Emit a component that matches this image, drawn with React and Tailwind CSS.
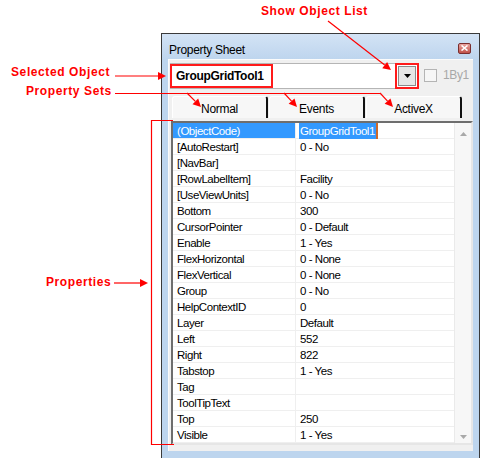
import React from "react";

const rows = [
  ["(ObjectCode)", "GroupGridTool1"],
  ["[AutoRestart]", "0 - No"],
  ["[NavBar]", ""],
  ["[RowLabelItem]", "Facility"],
  ["[UseViewUnits]", "0 - No"],
  ["Bottom", "300"],
  ["CursorPointer", "0 - Default"],
  ["Enable", "1 - Yes"],
  ["FlexHorizontal", "0 - None"],
  ["FlexVertical", "0 - None"],
  ["Group", "0 - No"],
  ["HelpContextID", "0"],
  ["Layer", "Default"],
  ["Left", "552"],
  ["Right", "822"],
  ["Tabstop", "1 - Yes"],
  ["Tag", ""],
  ["ToolTipText", ""],
  ["Top", "250"],
  ["Visible", "1 - Yes"],
];

// red annotation arrow: line from (x1,y1) with a filled head ending at (x2,y2)
function Arrow({ x1, y1, x2, y2, size = 8 }) {
  const a = Math.atan2(y2 - y1, x2 - x1);
  const bx = x2 - Math.cos(a) * size;
  const by = y2 - Math.sin(a) * size;
  const w = size * 0.5;
  const p1 = `${bx + Math.sin(a) * w},${by - Math.cos(a) * w}`;
  const p2 = `${bx - Math.sin(a) * w},${by + Math.cos(a) * w}`;
  return (
    <g>
      <line x1={x1} y1={y1} x2={bx} y2={by} stroke="#ff0000" strokeWidth="1.2" />
      <polygon points={`${x2},${y2} ${p1} ${p2}`} fill="#ff0000" />
    </g>
  );
}

export default function App() {
  return (
    <div className="relative w-[481px] h-[458px] bg-white overflow-hidden pl-[161px] pt-[33px] font-['Liberation_Sans',Arial,sans-serif]">
      {/* dialog window */}
      <div className="w-[319px] h-[432px] border border-[#3a3a3a] bg-[#bdd5ee] flex flex-col">
        <div className="h-[25px] shrink-0 flex items-center justify-between pl-[7px] pr-[8px] bg-gradient-to-b from-[#d3e3f5] to-[#bed5ee]">
          <span className="text-[12px] tracking-[-0.3px] text-black pt-[6px]">Property Sheet</span>
          <div className="w-[13px] h-[11px] mt-[3px] rounded-[2px] border border-[#7a2e2e] bg-gradient-to-b from-[#e9a4a0] to-[#c0504a] flex items-center justify-center">
            <svg width="7" height="6" viewBox="0 0 7 6">
              <path d="M0.5 0.5 L6.5 5.5 M6.5 0.5 L0.5 5.5" stroke="white" strokeWidth="1.6" />
            </svg>
          </div>
        </div>

        <div className="mx-[6px] h-[392px] bg-[#f0f0f0] border-t border-l border-[#fbfbfb] flex flex-col">
          {/* object combo */}
          <div className="flex items-start mt-[3px] ml-[1px]">
            <div className="relative w-[249px] h-[26px] bg-white border border-[#b5b5b5] flex items-center justify-end">
              <span className="absolute left-[5px] top-[5px] text-[12px] font-bold tracking-[-0.3px] text-black leading-[15px]">GroupGridTool1</span>
              <div className="absolute left-[-1px] top-0 w-[103px] h-[24px] border-2 border-[#ff1a1a]" />
              <div className="w-[24px] h-[26px] -mr-[1px] border-2 border-[#ff1a1a] flex items-center justify-center">
                <div className="w-[18px] h-[20px] bg-[#e6e6e6] border border-[#8a8a8a] flex items-center justify-center">
                  <svg width="7" height="4" viewBox="0 0 7 4">
                    <path d="M0 0 H7 L3.5 4 Z" fill="black" />
                  </svg>
                </div>
              </div>
            </div>
            <div className="w-[13px] h-[13px] mt-[6px] ml-[5px] border border-[#b4b4b4] bg-[#f6f6f6]" />
            <span className="ml-[6px] mt-[5px] text-[12px] tracking-[-0.4px] leading-[15px] text-[#a8a8a8]">1By1</span>
          </div>

          {/* tabs */}
          <div className="flex gap-[1px] ml-[3px] mt-[7px]">
            {["Normal", "Events", "ActiveX"].map((t) => (
              <div
                key={t}
                className="w-[96px] h-[22px] rounded-t-[3px] bg-[#f7f7f7] border-t border-l border-white border-r-2 border-r-[#111] flex items-center justify-center pt-[2px] text-[12px] tracking-[-0.3px] text-black"
              >
                {t}
              </div>
            ))}
          </div>

          {/* property grid */}
          <div className="mt-[3px] ml-[2px] w-[302px] h-[324px] flex border-t-2 border-l-2 border-t-[#6e6e6e] border-l-[#6e6e6e] border-b-2 border-r-2 border-b-[#e6e6e6] border-r-[#e6e6e6] bg-white">
            <div className="w-[281px] flex flex-col">
              {rows.map(([name, value], i) => (
                <div key={name} className="h-[16px] flex border-b border-[#efefef] text-[11.5px] leading-[16px] tracking-[-0.45px]">
                  <div className={`w-[122px] pl-[4px] ${i === 0 ? "bg-[#3399ff] text-white" : "text-black"}`}>{name}</div>
                  <div className="flex-1 border-l border-[#efefef] pl-[3px] text-black">
                    {i === 0 ? (
                      <span className="inline-block bg-[#3399ff] text-white px-[1px] border-r-2 border-[#cc6a2c]">{value}</span>
                    ) : (
                      <span className="pl-[1px]">{value}</span>
                    )}
                  </div>
                </div>
              ))}
            </div>
            <div className="w-[17px] bg-[#f7f7f7] border-l border-[#eaeaea] flex flex-col items-center justify-between pt-[9px] pb-[4px]">
              <svg width="7" height="4" viewBox="0 0 7 4">
                <path d="M0 4 H7 L3.5 0 Z" fill="#a9a9a9" />
              </svg>
              <svg width="7" height="4" viewBox="0 0 7 4">
                <path d="M0 0 H7 L3.5 4 Z" fill="#a9a9a9" />
              </svg>
            </div>
          </div>
        </div>
      </div>

      {/* annotations */}
      <span className="absolute left-[11px] top-[65px] text-[12px] font-bold tracking-[0.6px] text-[#ff0000] leading-[15px]">Selected Object</span>
      <span className="absolute left-[26px] top-[84px] text-[12px] font-bold tracking-[0.6px] text-[#ff0000] leading-[15px]">Property Sets</span>
      <span className="absolute left-[46px] top-[275px] text-[12px] font-bold tracking-[0.6px] text-[#ff0000] leading-[15px]">Properties</span>
      <span className="absolute left-[261px] top-[4px] text-[12px] font-bold tracking-[0.6px] text-[#ff0000] leading-[15px]">Show Object List</span>

      <svg className="absolute inset-0 pointer-events-none" width="481" height="458">
        <Arrow x1={115} y1={76} x2={166} y2={76} />
        <Arrow x1={114} y1={283} x2={148} y2={283} />
        <line x1={115} y1={93.5} x2={380} y2={93.5} stroke="#ff0000" strokeWidth="1.2" />
        <Arrow x1={187} y1={93} x2={201} y2={107} />
        <Arrow x1={284} y1={93} x2={297} y2={107} />
        <Arrow x1={380} y1={93} x2={393} y2={107} />
        <Arrow x1={328} y1={21} x2={391} y2={70} />
        <path d="M173 120.5 H151.5 V444.5 H174" fill="none" stroke="#ff0000" strokeWidth="1.2" />
      </svg>
    </div>
  );
}
